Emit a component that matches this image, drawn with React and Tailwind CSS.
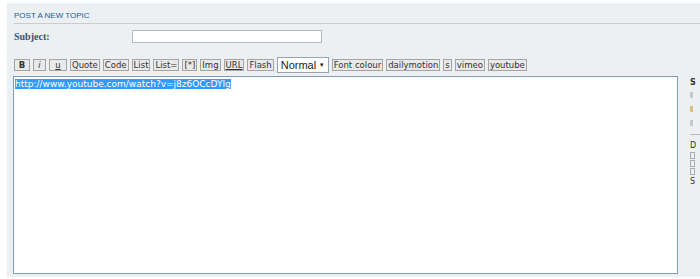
import { useState } from "react";

const buttons = [
  { label: "B", className: "font-bold w-[16px]" },
  { label: "i", className: "italic w-[13px]" },
  { label: "u", className: "underline w-[18px]" },
  { label: "Quote" },
  { label: "Code" },
  { label: "List" },
  { label: "List=" },
  { label: "[*]" },
  { label: "Img" },
  { label: "URL", className: "underline" },
  { label: "Flash" },
];

const extraButtons = ["Font colour", "dailymotion", "s", "vimeo", "youtube"];

function ToolbarButton({ label, className = "" }) {
  return (
    <button
      type="button"
      className={`h-[12px] border border-[#a4a4a4] bg-[#e9e9e9] px-[1px] text-[8.5px] leading-[10px] text-[#333] ${className}`}
    >
      {label}
    </button>
  );
}

function App() {
  const [message, setMessage] = useState("http://www.youtube.com/watch?v=j8z6OCcDYIg");

  return (
    <div className="h-[279px] w-[700px] overflow-hidden bg-white pl-[7px] pt-[3px] font-['DejaVu_Sans',sans-serif]">
      <div className="flex h-[274px] flex-col bg-[#ecf0f3] pl-[7px] pt-[8px]">
        <h2 className="border-b border-[#cccccc] pb-[2px] font-['Liberation_Sans',sans-serif] text-[8px] leading-[10px] text-[#1b5c9c] uppercase">
          Post a new topic
        </h2>

        <div className="mt-[6px] flex items-center">
          <label className="w-[118px] font-['Liberation_Serif',serif] text-[10px] leading-[12px] font-bold text-[#425067]">
            Subject:
          </label>
          <input
            type="text"
            className="h-[13px] w-[190px] border border-[#b4bac0] bg-white outline-none"
          />
        </div>

        <div className="mt-[14px] flex items-center gap-[3px]">
          {buttons.map((button) => (
            <ToolbarButton key={button.label} {...button} />
          ))}
          <div className="flex h-[16px] w-[52px] items-center justify-between border border-[#9aa3ad] bg-white px-[3px] font-['Liberation_Sans',sans-serif] text-[11px] text-[#222]">
            <span>Normal</span>
            <span className="text-[6px]">▼</span>
          </div>
          {extraButtons.map((label) => (
            <ToolbarButton key={label} label={label} />
          ))}
        </div>

        <div className="mt-[3px] flex">
          <div className="ml-[-1px] h-[198px] w-[671px] border border-[#7f9db9] bg-white px-[1px] pt-[2px] text-[9px] leading-[11px]">
            <span className="bg-[#3399ff] text-white">{message}</span>
          </div>
          <div className="ml-[12px] flex w-[10px] flex-col overflow-hidden pt-[2px] text-[8px] leading-[10px] text-[#333]">
            <span className="font-bold">S</span>
            <span className="mt-[4px] h-[6px] w-[3px] bg-[#c8c8c8]" />
            <span className="mt-[8px] h-[6px] w-[3px] bg-[#d9c27a]" />
            <span className="mt-[8px] h-[6px] w-[3px] bg-[#c8c8c8]" />
            <span className="mt-[8px] h-px w-[10px] bg-[#bbbbbb]" />
            <span className="mt-[6px]">D</span>
            <span className="mt-[1px] h-[7px] w-[5px] border border-[#aaa]" />
            <span className="mt-[1px] h-[7px] w-[5px] border border-[#aaa]" />
            <span className="mt-[1px] h-[7px] w-[5px] border border-[#aaa]" />
            <span className="mt-[2px]">S</span>
          </div>
        </div>
        <span className="hidden" onClick={() => setMessage(message)} />
      </div>
    </div>
  );
}

export default App;
